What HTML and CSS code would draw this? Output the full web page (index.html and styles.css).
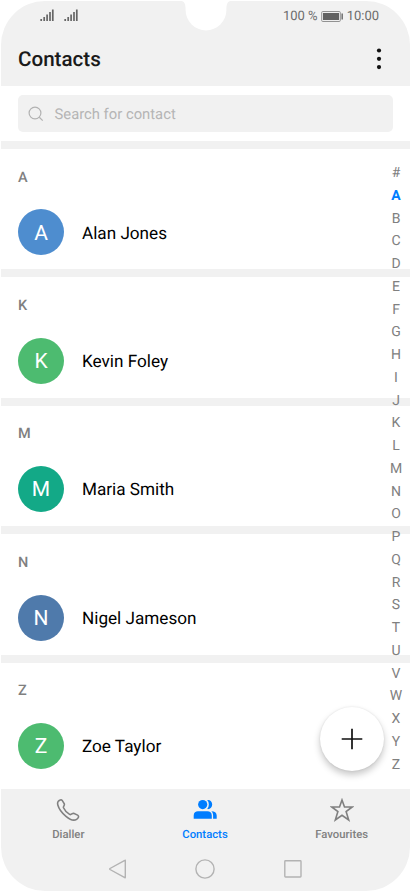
FILE: index.html
```html
<!DOCTYPE html>
<html lang="en">
<head>
<meta charset="utf-8">
<title>Contacts</title>
<link rel="stylesheet" href="styles.css">
</head>
<body>
<div class="phone">
  <svg class="notch" viewBox="0 0 52 31"><path d="M0 0V.7C5 .7 5.600 5 5.600 10A20.400 20.400 0 0 0 46.400 10C46.400 5 47 .7 52 .7V0Z" fill="#fff"/></svg>
  <header class="header">
    <div class="status">
      <div class="signals">
        <svg class="signal" viewBox="0 0 14 13"><path d="M1.200 10v2M4.200 8v4M7.100 5.500v6.500M10 3v9M12.800 .5V12"/></svg>
        <svg class="signal" viewBox="0 0 14 13"><path d="M1.200 10v2M4.200 8v4M7.100 5.500v6.500M10 3v9M12.800 .5V12"/></svg>
      </div>
      <div class="power">
        <span class="percent">100 %</span>
        <svg class="battery" viewBox="0 0 23 11"><rect x=".7" y=".5" width="18.600" height="10" rx="1" fill="#eee" stroke="#929292"/><rect x="2" y="2" width="16" height="7" fill="#616161"/><path d="M21.200 2.500v6" stroke="#777" stroke-width="1.600"/></svg>
        <span class="clock">10:00</span>
      </div>
    </div>
    <div class="titlebar">
      <h1>Contacts</h1>
      <svg class="more" viewBox="0 0 6 22"><circle cx="3" cy="2.500" r="2.100"/><circle cx="3" cy="10.800" r="2.100"/><circle cx="3" cy="19.100" r="2.100"/></svg>
    </div>
  </header>
  <div class="search-area">
    <div class="search">
      <svg class="lens" viewBox="0 0 16 16"><circle cx="7" cy="7" r="5.900"/><path d="M11.300 11.300l3.400 3.300"/></svg>
      <span>Search for contact</span>
    </div>
  </div>
  <main class="contacts">
    <section><h2>A</h2><div class="person"><span class="avatar blue">A</span><span class="name">Alan Jones</span></div></section>
    <section><h2>K</h2><div class="person"><span class="avatar green">K</span><span class="name">Kevin Foley</span></div></section>
    <section><h2>M</h2><div class="person"><span class="avatar teal">M</span><span class="name">Maria Smith</span></div></section>
    <section><h2>N</h2><div class="person"><span class="avatar navy">N</span><span class="name">Nigel Jameson</span></div></section>
    <section><h2>Z</h2><div class="person"><span class="avatar green">Z</span><span class="name">Zoe Taylor</span></div></section>
    <div class="index"><span>#</span><span class="current">A</span><span>B</span><span>C</span><span>D</span><span>E</span><span>F</span><span>G</span><span>H</span><span>I</span><span>J</span><span>K</span><span>L</span><span>M</span><span>N</span><span>O</span><span>P</span><span>Q</span><span>R</span><span>S</span><span>T</span><span>U</span><span>V</span><span>W</span><span>X</span><span>Y</span><span>Z</span></div>
    <div class="add"><svg viewBox="0 0 22 22"><path d="M11 .7v20.600M.7 11h20.600"/></svg></div>
  </main>
  <footer class="footer">
    <nav class="tabs">
      <div class="tab"><svg viewBox="0 0 24 24" class="line"><path d="M2.300 3.300C3.500 2 5.200 1.200 6.200 2.400L8.300 5.900C8.900 7.300 7 8.200 7.500 9.700C8.600 12.200 11 14.800 13.600 16.400C15.500 17.300 15.900 15 17.700 15.200L21.600 17.100C23.400 18.200 22.300 20.200 20.600 21.300C18 23 13.500 21.300 10 18.300C6 15 2.900 10.700 1.900 7.200C1.400 5.500 1.500 4.200 2.300 3.300Z"/></svg><span>Dialler</span></div>
      <div class="tab active"><svg viewBox="0 0 24 24"><circle cx="9.700" cy="6.600" r="4.600"/><path d="M.7 20.700v-3.300c0-2.800 2-4.200 4.300-4.200h9.500c2.300 0 4.300 1.400 4.300 4.200v3.300zM14.200 2.100c2.800-.5 5 1.700 5 4.500s-2.200 5-5 4.500c2.200-2.500 2.200-6.500 0-9zM18.300 13.200c3.300 0 5.400 1.600 5.400 4.200v3.300h-3.600v-3.300c0-1.800-.6-3.200-1.800-4.200z"/></svg><span>Contacts</span></div>
      <div class="tab"><svg viewBox="0 0 24 24" class="line"><path d="M12 2L14.500 9H22.200L16.100 13.500L18.700 22L12 17.300L5.300 22L7.900 13.500L1.800 9H9.500Z"/></svg><span>Favourites</span></div>
    </nav>
    <div class="system">
      <svg viewBox="0 0 20 20"><path d="M17.300 1.500V18.500Q17.300 19 16.800 18.700L2 10.500Q1.300 10 2 9.500L16.800 1.300Q17.300 1 17.300 1.500Z"/></svg>
      <svg viewBox="0 0 20 20"><circle cx="10" cy="10" r="9.100"/></svg>
      <svg viewBox="0 0 20 20"><rect x="1.800" y="1.800" width="16.200" height="16.200" rx=".7"/></svg>
    </div>
  </footer>
</div>
</body>
</html>
```
FILE: styles.css
```css
* { box-sizing: border-box; }
body { margin: 0; background: #fff; font-family: Roboto, sans-serif; text-rendering: geometricPrecision; }
svg { display: block; flex: none; }
.phone { position: relative; width: 411px; height: 892px; padding: 1px; overflow: hidden; }
.notch { position: absolute; top: 0; left: 180px; width: 52px; height: 31px; }
.header { height: 85px; background: #f1f1f1; border-radius: 44px 44px 0 0; }
.status { display: flex; justify-content: space-between; height: 31px; padding: 0 31px 0 39px; font-size: 13px; line-height: 30px; color: #6c6c6c; }
.signals { display: flex; gap: 9.5px; padding-top: 8px; }
.signal { width: 14px; height: 13px; fill: none; stroke: #666; stroke-width: 1.7; }
.power { display: flex; align-items: center; height: 30px; white-space: nowrap; }
.percent, .clock { padding-top: 1px; }
.battery { width: 23px; height: 11px; margin: 0 3px 0 3px; }
.titlebar { display: flex; justify-content: space-between; align-items: center; height: 54px; padding: 0 28px 0 17px; }
h1 { margin: 0; padding-top: 2px; font-size: 20.6px; line-height: 52px; font-weight: 500; color: #1a1a1a; }
.more { width: 6px; height: 22px; fill: #111; }
.search-area { height: 55px; padding: 9px 17px; }
.search { display: flex; align-items: center; gap: 10.5px; height: 37px; padding-left: 10px; border-radius: 5px; background: #f1f1f1; color: #b5b5b5; font-size: 14.8px; }
.lens { width: 16px; height: 16px; fill: none; stroke: #b2b2b2; stroke-width: 1.2; }
.contacts { position: relative; height: 648px; overflow: hidden; }
section { height: 128.4px; border-top: 8.800px solid #f1f1f1; padding: 19.600px 17px 0; }
h2 { margin: 0; font-size: 14.5px; line-height: 18px; font-weight: 500; color: #808080; }
.person { display: flex; align-items: center; gap: 18px; margin-top: 22.800px; font-size: 17.150px; color: #000; }
.name { padding-top: 2.500px; }
.avatar { display: flex; align-items: center; justify-content: center; width: 46px; height: 46px; padding-top: 2.500px; border-radius: 50%; color: #fff; font-size: 21px; }
.blue { background: #4e8dcf; }
.green { background: #4dbb70; }
.teal { background: #13a987; }
.navy { background: #4f7aab; }
.index { position: absolute; top: 21.100px; right: 0; width: 28px; font-size: 14px; line-height: 22.75px; text-align: center; color: #808080; }
.index span { display: block; height: 22.75px; }
.index .current { color: #007dff; font-weight: 700; }
.add { position: absolute; left: 318.600px; top: 565.5px; display: flex; align-items: center; justify-content: center; width: 64px; height: 64px; border-radius: 50%; background: #fff; box-shadow: 0 4px 7px rgba(0,0,0,.22), 0 0 2px rgba(0,0,0,.1); }
.add svg { width: 22px; height: 22px; stroke: #111; stroke-width: 1.7; }
.footer { height: 102px; background: #f1f1f1; border-radius: 0 0 44px 44px; }
.tabs { display: flex; height: 56px; margin: 0 0 0 -1px; padding-top: 9px; }
.tab { flex: 1; display: flex; flex-direction: column; align-items: center; font-size: 11.3px; line-height: 14px; font-weight: 500; color: #808080; }
.tab svg { width: 24px; height: 24px; margin-bottom: 5.5px; fill: currentColor; }
.tab .line { fill: none; stroke: #808080; stroke-width: 1.6; }
.tab.active { color: #007dff; }
.system { display: flex; justify-content: center; gap: 67.500px; padding: 14px 1px 0 0; }
.system svg { width: 20px; height: 20px; fill: none; stroke: #b3b3b3; stroke-width: 1.4; }
```
